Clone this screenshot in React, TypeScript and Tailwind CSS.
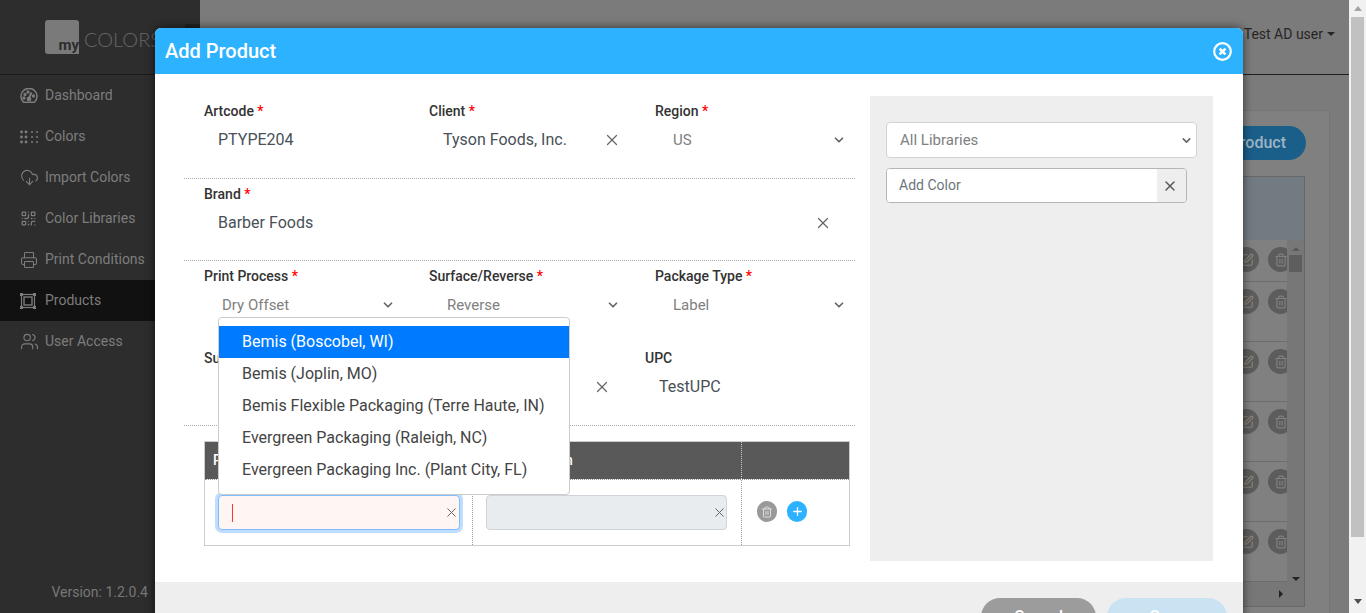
import type { ReactNode } from "react";
import { ChevronDown, CloudDownload, Plus, Printer, QrCode, SquarePen, Trash2, Users, X } from "lucide-react";

const font = "[font-family:Roboto,'Liberation_Sans',sans-serif]";

function DashboardIcon() {
  return (
    <svg width="18" height="16" viewBox="0 0 18 16" fill="none" stroke="currentColor" strokeWidth="1.5">
      <path d="M3.5 14.2 A8 8 0 1 1 14.5 14.2 Z" />
      <path d="M9 10 L11.5 4.5" strokeWidth="2" />
      <circle cx="5" cy="6.5" r="0.9" fill="currentColor" />
      <circle cx="8" cy="4" r="0.9" fill="currentColor" />
      <circle cx="13.5" cy="8" r="0.9" fill="currentColor" />
      <circle cx="4" cy="10" r="0.9" fill="currentColor" />
      <circle cx="9" cy="11" r="1.6" fill="currentColor" />
    </svg>
  );
}

function ColorsIcon() {
  const xs = [1.5, 6, 12, 17];
  const ys = [2, 7, 12];
  return (
    <svg width="19" height="14" viewBox="0 0 19 14" fill="currentColor">
      {ys.map((y) =>
        xs.map((x) => <circle key={`${x}-${y}`} cx={x} cy={y} r={x < 8 ? 1.4 : 1} />),
      )}
    </svg>
  );
}

function ProductsIcon() {
  return (
    <svg width="16" height="16" viewBox="0 0 16 16" fill="none" stroke="currentColor" strokeWidth="1.2">
      <rect x="1.5" y="1.5" width="13" height="13" />
      <rect x="4" y="4" width="8" height="8" strokeWidth="1.4" />
      <rect x="0" y="0" width="3" height="3" fill="currentColor" stroke="none" />
      <rect x="13" y="0" width="3" height="3" fill="currentColor" stroke="none" />
      <rect x="0" y="13" width="3" height="3" fill="currentColor" stroke="none" />
      <rect x="13" y="13" width="3" height="3" fill="currentColor" stroke="none" />
    </svg>
  );
}

const navItems: { label: string; icon: ReactNode; active?: boolean }[] = [
  { label: "Dashboard", icon: <DashboardIcon /> },
  { label: "Colors", icon: <ColorsIcon /> },
  { label: "Import Colors", icon: <CloudDownload size={19} strokeWidth={1.4} /> },
  { label: "Color Libraries", icon: <QrCode size={17} strokeWidth={1.8} /> },
  { label: "Print Conditions", icon: <Printer size={18} strokeWidth={1.4} /> },
  { label: "Products", icon: <ProductsIcon />, active: true },
  { label: "User Access", icon: <Users size={19} strokeWidth={1.4} /> },
];

const supplierOptions = [
  "Bemis (Boscobel, WI)",
  "Bemis (Joplin, MO)",
  "Bemis Flexible Packaging (Terre Haute, IN)",
  "Evergreen Packaging (Raleigh, NC)",
  "Evergreen Packaging Inc. (Plant City, FL)",
];

const bgRows = ["h-[42px] pt-[7px]", "h-[60px] pt-[7px]", "h-[60px] pt-[7px]", "h-[60px] pt-[7px]", "h-[60px] pt-[7px]", "h-[60px] pt-[7px]"];

function Label({ text, required = true }: { text: string; required?: boolean }) {
  return (
    <div className="h-[21px] text-[14px] leading-[21px] font-medium text-[#333]">
      {text}
      {required && <span className="text-[#f00]"> *</span>}
    </div>
  );
}

function TextField({ label, value, width, clear, required }: { label: string; value: string; width: string; clear?: boolean; required?: boolean }) {
  return (
    <div>
      <Label text={label} required={required} />
      <div className={`flex h-[36px] items-center justify-between pl-[14px] text-[16px] text-[#495057] ${width}`}>
        <span>{value}</span>
        {clear && <X size={18} strokeWidth={1.6} className="text-[#666]" />}
      </div>
    </div>
  );
}

function SelectField({ label, value }: { label: string; value: string }) {
  return (
    <div>
      <Label text={label} />
      <div className="flex h-[36px] w-[191px] items-center justify-between pl-[18px] text-[15px] text-[#808080]">
        <span>{value}</span>
        <ChevronDown size={14} strokeWidth={3} className="text-[#666]" />
      </div>
    </div>
  );
}

function Sidebar() {
  return (
    <aside className="flex h-full w-[200px] shrink-0 flex-col bg-[#2d2d2d]">
      <div className="flex h-[75px] shrink-0 border-b border-[#1a1a1a]">
        <div className="mt-[20px] ml-[45px] flex h-[34px] w-[34px] items-end justify-end rounded-[3px] rounded-br-none bg-[#7a7a7a] text-[15px] leading-[18px] font-bold text-[#2d2d2d]">
          my
        </div>
        <div className="mt-[25px] ml-[5px] text-[20px] leading-[28px] font-light text-[#666] [font-family:Lato,sans-serif]">COLORS</div>
        <div className="mt-[24px] ml-auto h-[30px] w-[15px] bg-[#222]" />
      </div>
      <nav className="flex-1">
        {navItems.map((item) => (
          <div
            key={item.label}
            className={`flex h-[41px] items-center text-[14px] text-[#7d7d7d] ${item.active ? "bg-[#111]" : ""}`}
          >
            <span className="flex w-[45px] shrink-0 justify-start pl-[20px]">{item.icon}</span>
            {item.label}
          </div>
        ))}
      </nav>
      <div className="pr-[52px] pb-[10px] text-right text-[14px] leading-[21px] text-[#777]">Version: 1.2.0.4</div>
    </aside>
  );
}

function BackgroundPage() {
  return (
    <main className="flex h-full min-w-0 flex-1 flex-col bg-[#7b7b7b]">
      <header className="flex h-[75px] shrink-0 items-start justify-end border-b border-[#1f1f1f] pt-[24px] pr-[14px] text-[14px] leading-[21px] text-[#262626]">
        Test AD user
        <span className="mt-[8px] ml-[4px] h-0 w-0 border-x-[4px] border-t-[4px] border-x-transparent border-t-[#262626]" />
      </header>
      <div className="min-h-0 flex-1 pt-[35px] pr-[19px]">
        <div className="h-[520px] border border-[#757575] bg-[#808080] pt-[15px] pr-[24px]">
          <div className="-mr-[1px] flex justify-end">
            <div className="flex h-[34px] w-[200px] items-center justify-end rounded-full bg-[#1a5e8a] pr-[20px] text-[16px] font-medium text-[#9fb4c2]">
              Add Product
            </div>
          </div>
          <div className="mt-[16px] border border-[#686868]">
            <div className="h-[63px] bg-[#737b82]" />
            <div className="flex">
              <div className="min-w-0 flex-1 overflow-hidden">
                {bgRows.map((row, i) => (
                  <div key={i} className={`flex justify-end gap-[9px] border-b border-[#6c6c6c] ${row}`}>
                    <div className="flex h-[25px] w-[25px] items-center justify-center rounded-full bg-[#5c5c5c] text-[#8a8378]">
                      <SquarePen size={14} />
                    </div>
                    <div className="-mr-[6px] flex h-[25px] w-[25px] items-center justify-center rounded-full bg-[#5c5c5c] text-[#808080]">
                      <Trash2 size={14} />
                    </div>
                  </div>
                ))}
              </div>
              <div className="relative w-[17px] shrink-0 bg-[#777]">
                <div className="mx-auto mt-[7px] h-0 w-0 border-x-[4px] border-b-[4px] border-x-transparent border-b-[#5a5a5a]" />
                <div className="mx-auto mt-[4px] h-[17px] w-[13px] bg-[#5e5e5e]" />
                <div className="absolute right-[4px] bottom-[1px] h-0 w-0 border-x-[4px] border-t-[4px] border-x-transparent border-t-[#222]" />
              </div>
            </div>
            <div className="flex h-[24px] items-center justify-end bg-[#777] pr-[21px]">
              <div className="h-0 w-0 border-y-[4px] border-l-[4px] border-y-transparent border-l-[#222]" />
            </div>
          </div>
        </div>
      </div>
    </main>
  );
}

function PageScrollbar() {
  return (
    <div className="flex h-full w-[17px] shrink-0 flex-col items-center bg-[#f1f1f1]">
      <div className="mt-[6px] h-0 w-0 border-x-[4px] border-b-[5px] border-x-transparent border-b-[#a3a3a3]" />
      <div className="mt-[6px] h-[520px] w-[13px] bg-[#c1c1c1]" />
      <div className="mt-[62px] h-0 w-0 border-x-[4px] border-t-[5px] border-x-transparent border-t-[#505050]" />
    </div>
  );
}

function PlantTable() {
  return (
    <div className="mt-[15px] ml-[20px] h-[105px] w-[646px] border border-[#ccc]">
      <div className="grid h-[37px] grid-cols-[267px_269px_1fr] bg-[#595959] text-[14px] leading-[37px] font-medium text-white">
        <div className="pl-[8px]">Plant</div>
        <div className="border-l border-dotted border-[#ccc] pl-[12px]">Print Location</div>
        <div className="border-l border-dotted border-[#ccc]" />
      </div>
      <div className="grid h-[66px] grid-cols-[267px_269px_1fr] border-t border-dotted border-[#999]">
        <div className="pt-[15px] pl-[13px]">
          <div className="flex h-[35px] w-[242px] items-center justify-between rounded-[4px] border border-[#80bdff] bg-[#fff5f2] pl-[13px] shadow-[0_0_0_3px_#bfdeff]">
            <span className="h-[18px] w-px bg-[#f33]" />
            <X size={15} strokeWidth={1.6} className="text-[#666]" />
          </div>
        </div>
        <div className="border-l border-dotted border-[#999] pt-[15px] pl-[13px]">
          <div className="flex h-[35px] w-[241px] items-center justify-end rounded-[4px] border border-[#ced4da] bg-[#e9ecef]">
            <X size={15} strokeWidth={1.6} className="-mr-[1px] text-[#666]" />
          </div>
        </div>
        <div className="flex items-start gap-[10px] border-l border-dotted border-[#999] pt-[21px] pl-[15px]">
          <div className="flex h-[21px] w-[20px] items-center justify-center rounded-full bg-[#999] text-[#ddd]">
            <Trash2 size={12} />
          </div>
          <div className="flex h-[21px] w-[20px] items-center justify-center rounded-full bg-[#2db2ff] text-white">
            <Plus size={13} strokeWidth={2.4} />
          </div>
        </div>
      </div>
    </div>
  );
}

function AddProductModal() {
  return (
    <div className="absolute top-[28px] left-[155px] h-[640px] w-[1088px] overflow-hidden rounded-t-[6px] bg-white shadow-[0_0_10px_rgba(0,0,0,0.6)]">
      <div className="flex h-[46px] items-center justify-between bg-[#2db2ff] pr-[11px] pl-[10px] text-white">
        <span className="text-[20px] font-medium">Add Product</span>
        <svg width="19" height="19" viewBox="0 0 19 19" fill="none" stroke="currentColor" strokeWidth="2.2">
          <circle cx="9.5" cy="9.5" r="8.3" />
          <path d="M6.6 6.6 L12.4 12.4 M12.4 6.6 L6.6 12.4" strokeWidth="2.6" />
        </svg>
      </div>
      <div className="flex h-[508px] justify-between pt-[22px] pr-[30px] pb-[21px] pl-[29px]">
        <div className="relative w-[671px]">
          <div className="grid h-[83px] grid-cols-[225px_226px_1fr] border-b border-dotted border-[#aaa] pt-[5px] pl-[20px]">
            <TextField label="Artcode" value="PTYPE204" width="w-[191px]" />
            <TextField label="Client" value="Tyson Foods, Inc." width="w-[192px]" clear />
            <SelectField label="Region" value="US" />
          </div>
          <div className="h-[82px] border-b border-dotted border-[#aaa] pt-[5px] pl-[20px]">
            <TextField label="Brand" value="Barber Foods" width="w-[628px]" clear />
          </div>
          <div className="grid h-[87px] grid-cols-[225px_226px_1fr] pt-[5px] pl-[20px]">
            <SelectField label="Print Process" value="Dry Offset" />
            <SelectField label="Surface/Reverse" value="Reverse" />
            <SelectField label="Package Type" value="Label" />
          </div>
          <div className="grid h-[78px] grid-cols-[220px_221px_1fr] border-b border-dotted border-[#aaa] pl-[20px]">
            <TextField label="Supplier" value="" width="w-[184px]" />
            <TextField label="Customer" value="" width="w-[187px]" clear required={false} />
            <TextField label="UPC" value="TestUPC" width="w-[191px]" required={false} />
          </div>
          <PlantTable />
          <div className="absolute top-[221px] left-[34px] w-[352px] rounded-[4px] border border-[#ccc] bg-white py-[8px] text-[16px] leading-[32px] text-[#444]">
            {supplierOptions.map((option, i) => (
              <div key={option} className={`pl-[23px] ${i === 0 ? "bg-[#007bff] text-white" : ""}`}>
                {option}
              </div>
            ))}
          </div>
        </div>
        <div className="w-[343px] bg-[#eee] pt-[26px] pl-[16px]">
          <div className="flex h-[36px] w-[311px] items-center justify-between rounded-[4px] border border-[#ced4da] bg-white pr-[3px] pl-[13px] text-[15px] text-[#808080]">
            All Libraries
            <ChevronDown size={13} strokeWidth={3} className="text-[#666]" />
          </div>
          <div className="mt-[10px] flex h-[35px] w-[301px] overflow-hidden rounded-[4px] border border-[#b5b5b5]">
            <div className="flex flex-1 items-center bg-white pl-[12px] text-[14px] text-[#6c757d]">Add Color</div>
            <div className="flex w-[29px] items-center justify-center bg-[#eee] pr-[3px] text-[#555]">
              <X size={16} strokeWidth={2} />
            </div>
          </div>
        </div>
      </div>
      <div className="flex h-[60px] items-start justify-between bg-[#eee] pt-[16px] pr-[16px] pl-[52px]">
        <div className="pt-[12px] text-[14px] text-[#333]">* All Fields</div>
        <div className="flex gap-[11px]">
          <div className="flex h-[38px] w-[115px] items-center justify-center rounded-full bg-[#9c9c9c] text-[16px] font-medium text-white">Cancel</div>
          <div className="flex h-[38px] w-[120px] items-center justify-center rounded-full bg-[#c9e3f2] text-[16px] font-medium text-white">Save</div>
        </div>
      </div>
    </div>
  );
}

export default function App() {
  return (
    <div className={`relative flex h-[613px] w-full overflow-hidden ${font}`}>
      <Sidebar />
      <BackgroundPage />
      <PageScrollbar />
      <AddProductModal />
    </div>
  );
}
